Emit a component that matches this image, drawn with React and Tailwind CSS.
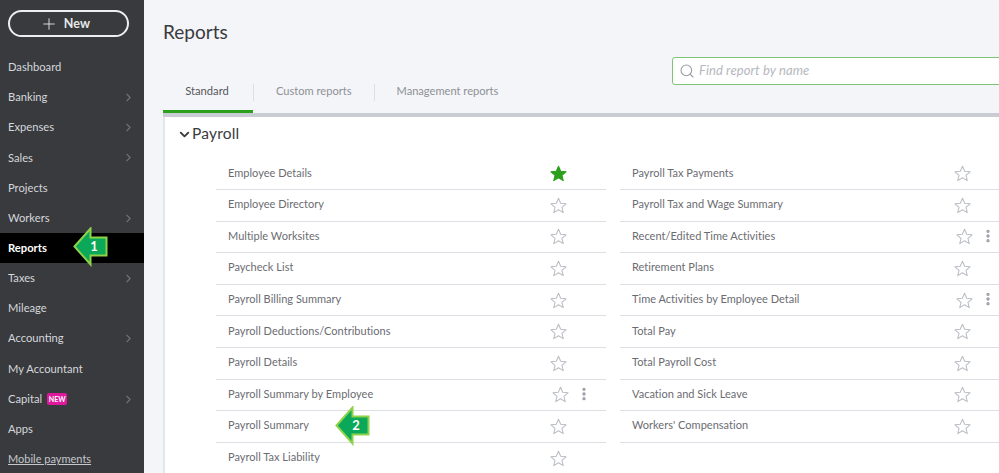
import React from "react";
import { Plus, ChevronRight, ChevronDown, Search, MoreVertical } from "lucide-react";

const nav = [
  ["Dashboard", false], ["Banking", true], ["Expenses", true], ["Sales", true], ["Projects", false],
  ["Workers", true], ["Reports", false], ["Taxes", true], ["Mileage", false], ["Accounting", true],
  ["My Accountant", false], ["Capital", true], ["Apps", false],
];
const left = [
  ["Employee Details", "fav"], ["Employee Directory"], ["Multiple Worksites"], ["Paycheck List"],
  ["Payroll Billing Summary"], ["Payroll Deductions/Contributions"], ["Payroll Details"],
  ["Payroll Summary by Employee", "more"], ["Payroll Summary"], ["Payroll Tax Liability"],
];
const right = [
  ["Payroll Tax Payments"], ["Payroll Tax and Wage Summary"], ["Recent/Edited Time Activities", "more"],
  ["Retirement Plans"], ["Time Activities by Employee Detail", "more"], ["Total Pay"],
  ["Total Payroll Cost"], ["Vacation and Sick Leave"], ["Workers' Compensation"],
];

function Star({ filled }) {
  return (
    <svg width="17" height="17" viewBox="0 0 24 24" className="shrink-0">
      <path
        d="M12 1.8l3.1 7.1 7.6.7-5.8 5 1.8 7.5-6.7-4-6.7 4 1.8-7.5-5.8-5 7.6-.7z"
        fill={filled ? "#2ca01c" : "none"}
        stroke={filled ? "#2ca01c" : "#babec5"}
        strokeWidth="1.5"
        strokeLinejoin="round"
      />
    </svg>
  );
}

function Arrow({ n, className }) {
  return (
    <div className={`absolute w-[35px] h-[40px] ${className}`}>
      <svg width="35" height="40" viewBox="0 0 35 40" className="absolute inset-0">
        <path d="M1.5 19.5L17.5 1.5V10.5H33.5V28.5H17.5V37.5Z" fill="#0aa858" stroke="#8ed24a" strokeWidth="2" />
      </svg>
      <span className="absolute left-[13px] w-[16px] top-[11px] text-center text-[13px] leading-[16px] font-bold text-white">{n}</span>
    </div>
  );
}

function Row({ name, kind, last }) {
  const more = kind === "more";
  return (
    <div className={`h-[31.6px] flex items-center pl-3 border-b ${last ? "border-transparent" : "border-[#dcdfe4]"}`}>
      <span className="flex-1 text-[11px] tracking-[0.02px] text-[#6b6c72] pb-[2px]">{name}</span>
      <span className={`flex items-center ${more ? "w-[56px] gap-[7px] pl-[2px]" : "w-[56px]"}`}>
        <Star filled={kind === "fav"} />
        {more && <MoreVertical size={16} strokeWidth={3} className="text-[#9a9da4] -mt-[2px]" />}
      </span>
    </div>
  );
}

export default function App() {
  return (
    <div className="relative w-[999px] h-[473px] overflow-hidden flex bg-[#f4f5f8] font-['Lato','Liberation_Sans',sans-serif]">
      <aside className="w-[144px] shrink-0 bg-[#393a3d] pt-[10px]">
        <div className="ml-2 w-[121px] h-[27px] border-2 border-[#eceef1] rounded-full flex items-center justify-center gap-[6px] text-[#e6e8ea] pr-[7px] pt-[1px]">
          <Plus size={18} strokeWidth={1.2} />
          <span className="text-[12.5px] font-bold tracking-[0.2px]">New</span>
        </div>
        <div className="mt-[15.5px]">
          {nav.map(([label, chev]) => {
            const active = label === "Reports";
            return (
              <div key={label} className={`h-[30.15px] flex items-center pl-2 pr-[9px] text-[11.2px] ${active ? "bg-black text-white font-bold" : "text-[#d4d7dc]"}`}>
                <span>{label}</span>
                {label === "Capital" && (
                  <span className="ml-[5px] h-[12px] w-[20px] rounded-[2px] bg-[#e0189b] text-white text-[7px] font-bold flex items-center justify-center">NEW</span>
                )}
                {chev && <ChevronRight size={13} strokeWidth={2} className="ml-auto text-[#6f7277]" />}
              </div>
            );
          })}
          <div className="h-[30px] flex items-center pl-2 text-[11px] text-[#c4c7cc] underline">Mobile payments</div>
        </div>
      </aside>

      <main className="flex-1 min-w-0 pl-[19px]">
        <h1 className="pt-[19px] text-[19px] leading-[26px] text-[#393a3d]">Reports</h1>
        <div className="ml-[509px] mt-[12px] h-[28px] w-[400px] border border-[#7cc576] rounded-[3px] bg-white flex items-center pl-[6px] gap-[4px]">
          <Search size={16} strokeWidth={1.6} className="text-[#9a9da4]" />
          <span className="text-[13px] italic tracking-[0.1px] text-[#b5b8be]">Find report by name</span>
        </div>

        <div className="flex h-[29px] items-start border-b-4 border-[#c9ccd2] box-content -mt-[1px]">
          <div className="h-[26px] w-[88px] pr-[2px] text-center text-[11.2px] leading-[14px] text-[#55565b] border-b-[3px] border-[#2ca01c] box-content">
            Standard
          </div>
          <div className="h-[17px] w-px bg-[#dcdfe4]" />
          <div className="px-[22px] text-[11.1px] leading-[14px] text-[#8d9096]">Custom reports</div>
          <div className="h-[17px] w-px bg-[#dcdfe4]" />
          <div className="px-[22px] text-[11.1px] leading-[14px] text-[#8d9096]">Management reports</div>
        </div>

        <section className="bg-white border-l-2 border-[#e4e6ea] h-[360px]">
          <div className="flex items-center pl-[12px] h-[34px] mb-[7.5px] text-[#393a3d]">
            <ChevronDown size={15} strokeWidth={3} />
            <span className="text-[15.5px] tracking-[0.2px]">Payroll</span>
          </div>
          <div className="ml-[51px] flex gap-[14px]">
            <div className="w-[390px] shrink-0">
              {left.map(([n, k], i) => <Row key={n} name={n} kind={k} last={i === left.length - 1} />)}
            </div>
            <div className="w-[390px] shrink-0">
              {right.map(([n, k]) => <Row key={n} name={n} kind={k} />)}
            </div>
          </div>
        </section>
      </main>

      <Arrow n="1" className="left-[73px] top-[227px]" />
      <Arrow n="2" className="left-[335px] top-[406px]" />
    </div>
  );
}
